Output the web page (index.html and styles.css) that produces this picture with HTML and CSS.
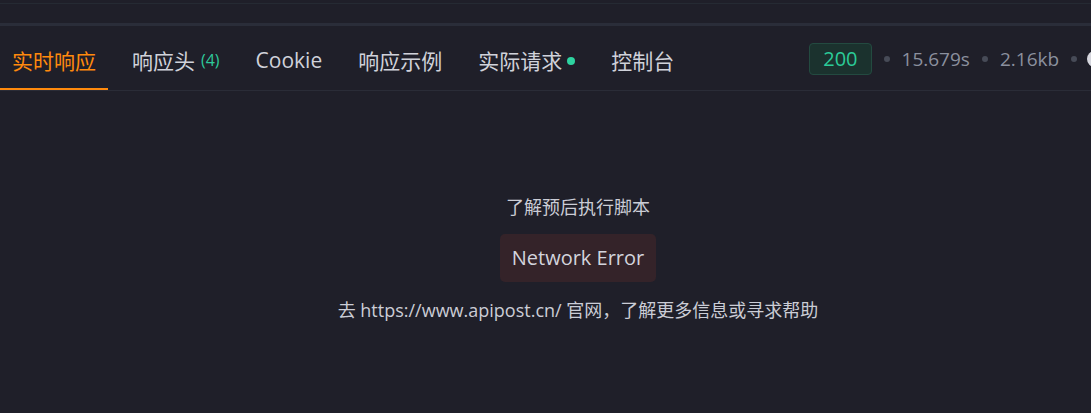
FILE: index.html
```html
<!DOCTYPE html>
<html lang="zh-CN">
<head>
    <meta charset="UTF-8">
    <meta name="viewport" content="width=device-width, initial-scale=1.0">
    <title>响应</title>
    <link rel="stylesheet" href="styles.css">
</head>
<body>
    <div class="top-strip"></div>
    <div class="top-space"></div>
    <div class="split-bar"></div>

    <div class="tab-bar">
        <div class="tabs">
            <div class="tab active">实时响应</div>
            <div class="tab">响应头 <span class="count">(4)</span></div>
            <div class="tab">Cookie</div>
            <div class="tab">响应示例</div>
            <div class="tab">实际请求<span class="live-dot"></span></div>
            <div class="tab">控制台</div>
        </div>
        <div class="status">
            <span class="code">200</span>
            <span class="sep"></span>
            <span class="meta">15.679s</span>
            <span class="sep"></span>
            <span class="meta">2.16kb</span>
            <span class="sep"></span>
            <span class="more-icon"></span>
        </div>
    </div>

    <div class="result">
        <p class="hint">了解预后执行脚本</p>
        <div class="error-box">Network Error</div>
        <p class="hint">去 https://www.apipost.cn/ 官网，了解更多信息或寻求帮助</p>
    </div>
</body>
</html>
```

FILE: styles.css
```css
body {
    margin: 0;
    height: 100vh;
    overflow: hidden;
    background-color: #1f1f29;
    color: #cfd1da;
    font-family: 'Open Sans', 'Noto Sans CJK SC', sans-serif;
}
.top-strip {
    height: 3px;
    border-bottom: 1px solid #252a33;
}
.top-space {
    height: 19px;
}
.split-bar {
    height: 3px;
    background-color: #2a2d39;
}
.tab-bar {
    display: flex;
    height: 64px;
    border-bottom: 1px solid #2a2c37;
    overflow: hidden;
}
.tabs {
    display: flex;
    gap: 12px;
    flex-shrink: 0;
}
.tab {
    display: flex;
    align-items: center;
    padding: 5px 12px 0;
    font-size: 21px;
    color: #d0d2da;
    border-bottom: 3px solid transparent;
    margin-bottom: -1px;
    white-space: nowrap;
}
.tab.active {
    color: #ff8a0d;
    border-bottom-color: #ff8a0d;
}
.count {
    font-size: 16px;
    color: #2ec99a;
    margin-left: 6px;
}
.live-dot {
    width: 8px;
    height: 8px;
    border-radius: 50%;
    background-color: #2ed3a0;
    margin-left: 5px;
    margin-top: 3px;
}
.status {
    display: flex;
    align-items: center;
    gap: 12px;
    padding-top: 2px;
    margin-left: 123px;
    flex-shrink: 0;
    font-size: 19px;
}
.code {
    height: 30px;
    line-height: 30px;
    padding: 0 13px;
    border-radius: 4px;
    background-color: #1b322e;
    border: 1px solid #234a40;
    color: #2bcb98;
    font-size: 20px;
}
.sep {
    width: 6px;
    height: 6px;
    border-radius: 50%;
    background-color: #474b57;
}
.meta {
    color: #8b909e;
}
.more-icon {
    width: 16px;
    height: 16px;
    border-radius: 50%;
    background-color: #d6d7de;
    margin-left: -2px;
    flex-shrink: 0;
}
.result {
    display: flex;
    flex-direction: column;
    align-items: center;
    padding: 104px 0 0 65px;
}
.hint {
    margin: 0;
    font-size: 18px;
    line-height: 24px;
    color: #cbcdd6;
}
.error-box {
    margin: 15px 0 16px;
    padding: 0 12px;
    height: 48px;
    line-height: 48px;
    border-radius: 5px;
    background-color: #342329;
    color: #d3d4dd;
    font-size: 20px;
}
```
